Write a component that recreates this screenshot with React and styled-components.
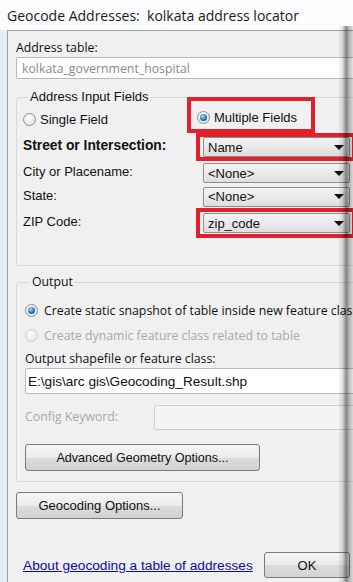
import React from 'react';
import styled, { createGlobalStyle, css } from 'styled-components';

const Global = createGlobalStyle`
  html, body { margin: 0; padding: 0; }
  body {
    width: 353px;
    height: 582px;
    overflow: hidden;
    background: #e3eef9;
    font-family: "Open Sans", "Liberation Sans", sans-serif;
    color: #111;
  }
`;

const Window = styled.div`
  position: relative;
  width: 353px;
  height: 582px;
  overflow: hidden;
`;

const Title = styled.div`
  height: 30px;
  padding-left: 7px;
  display: flex;
  align-items: center;
  background: #fbfcfd;
  font-size: 14px;
  color: #1a1a1a;
`;

const Panel = styled.div`
  margin-left: 7px;
  width: 370px;
  height: 560px;
  box-sizing: border-box;
  border: 1px solid #a0a0a0;
  background: #f0f0f0;
  padding: 8px 0 0 8px;
`;

const Label = styled.div`
  font-size: 12.3px;
  line-height: 18px;
  width: ${p => (p.w ? `${p.w}px` : 'auto')};
  flex: none;
  color: ${p => (p.disabled ? '#a8a8a8' : '#111')};
`;

const TextBox = styled.div`
  box-sizing: border-box;
  height: ${p => p.h || 21}px;
  width: ${p => p.w}px;
  border: 1px solid ${p => (p.disabled ? '#cfcfcf' : '#b9b9b9')};
  border-radius: 2px;
  background: ${p => (p.disabled ? '#f4f4f4' : '#fff')};
  padding: 0 ${p => p.px ?? 5}px;
  display: flex;
  align-items: center;
  font-size: ${p => p.fs || 12.3}px;
  color: ${p => (p.grey ? '#8a8a8a' : '#111')};
  font-family: ${p => (p.arial ? '"Liberation Sans", sans-serif' : 'inherit')};
`;

const Group = styled.fieldset`
  margin: ${p => p.mt || 0}px 0 0 0;
  padding: ${p => p.pad || '0'};
  border: 1px solid #d4d9dd;
  border-radius: 3px;
  height: ${p => p.h}px;
  box-sizing: border-box;
  min-width: 0;
`;

const Legend = styled.legend`
  padding: 0 2px;
  margin-left: 5px;
  font-size: ${p => (p.tahoma ? '13px' : '12.3px')};
  line-height: 16px;
  font-family: ${p => (p.tahoma ? '"Liberation Sans", sans-serif' : 'inherit')};
`;

const RadioRow = styled.div`
  display: flex;
  align-items: center;
  gap: ${p => (p.tahoma ? 4 : 6)}px;
  height: ${p => p.h || 22}px;
  margin-top: ${p => p.mt || 0}px;
  font-size: ${p => (p.tahoma ? '13px' : '12.3px')};
  font-family: ${p => (p.tahoma ? '"Liberation Sans", sans-serif' : 'inherit')};
  color: ${p => (p.disabled ? '#a8a8a8' : '#111')};
  white-space: nowrap;
`;

const RadioDot = styled.span`
  width: 13px;
  height: 13px;
  box-sizing: border-box;
  border-radius: 50%;
  border: 1px solid ${p => (p.disabled ? '#d0d0d0' : '#8c8c8c')};
  background: radial-gradient(circle at 40% 35%, #fff, #dcdcdc);
  display: inline-flex;
  align-items: center;
  justify-content: center;
  flex: none;
  ${p => p.checked && css`
    &::after {
      content: '';
      width: 7px;
      height: 7px;
      border-radius: 50%;
      background: radial-gradient(circle at 40% 35%, #9fdcff, #1b6fb5 60%, #0b3e70);
    }
  `}
`;

const Row = styled.div`
  display: flex;
  align-items: center;
  height: ${p => p.h || 26}px;
  margin-top: ${p => p.mt || 0}px;
`;

const TopRadios = styled.div`
  display: flex;
  align-items: flex-start;
  height: 36px;
  margin-top: -8px;
`;

const Highlight = styled.div`
  border: 4px solid #e2202b;
  box-sizing: border-box;
  display: flex;
  align-items: ${p => p.align || 'center'};
  margin-left: ${p => p.ml || 0}px;
  padding: ${p => p.pad || '0'};
  height: ${p => p.h}px;
  width: ${p => p.w}px;
  flex: none;
`;

const FieldLabel = styled.div`
  width: 180px;
  flex: none;
  font-size: ${p => (p.bold ? '13.8px' : '13px')};
  font-family: "Liberation Sans", sans-serif;
  font-weight: ${p => (p.bold ? 700 : 400)};
  color: #111;
  margin-top: -3px;
`;

const Combo = styled.div`
  box-sizing: border-box;
  width: 147px;
  height: 20px;
  border: 1px solid #8e8e8e;
  border-radius: 2px;
  background: linear-gradient(#f4f4f4, #dedede);
  display: flex;
  align-items: center;
  justify-content: space-between;
  padding: 0 5px 0 4px;
  font-size: 13px;
  font-family: "Liberation Sans", sans-serif;
  color: #111;
  flex: none;
  &::after {
    content: '';
    border-left: 5px solid transparent;
    border-right: 5px solid transparent;
    border-top: 5px solid #111;
  }
`;

const Button = styled.div`
  box-sizing: border-box;
  width: ${p => p.w}px;
  height: ${p => p.h || 27}px;
  margin: ${p => p.m || 0};
  border: 1px solid #7a7a7a;
  border-radius: 3px;
  background: linear-gradient(#f5f5f5 0%, #ebebeb 50%, #dcdcdc 51%, #d2d2d2 100%);
  display: flex;
  align-items: center;
  justify-content: center;
  font-size: ${p => p.fs || 13}px;
  font-family: "Liberation Sans", sans-serif;
  color: #111;
`;

const Footer = styled.div`
  display: flex;
  align-items: center;
  justify-content: space-between;
  margin-top: 33px;
  width: 334px;
  padding-left: 7px;
  box-sizing: border-box;
`;

const Link = styled.a`
  font-size: 13.7px;
  font-family: "Liberation Sans", sans-serif;
  color: #0a0aa8;
  text-decoration: underline;
`;

const EdgeShade = styled.div`
  position: absolute;
  top: 26px;
  right: 0;
  width: 15px;
  bottom: 0;
  pointer-events: none;
  background: linear-gradient(to right, rgba(0,0,0,0) 0%, rgba(0,0,0,0.12) 30%, rgba(0,0,0,0.45) 55%, rgba(0,0,0,0.25) 75%, rgba(0,0,0,0.1) 100%);
`;

const fields = [
  { label: 'Street or Intersection:', value: 'Name', bold: true, mark: true, h: 28 },
  { label: 'City or Placename:', value: '<None>', h: 24 },
  { label: 'State:', value: '<None>', h: 23 },
  { label: 'ZIP Code:', value: 'zip_code', mark: true, h: 30 },
];

function FieldRow({ f }) {
  const combo = <Combo>{f.value}</Combo>;
  return (
    <Row h={f.h}>
      <FieldLabel bold={f.bold}>{f.label}</FieldLabel>
      {f.mark ? (
        <Highlight ml={-7} pad="0 0 0 3px" h={f.h} w={160}>{combo}</Highlight>
      ) : combo}
    </Row>
  );
}

export default function App() {
  return (
    <Window>
      <Global />
      <Title>Geocode Addresses:&nbsp; kolkata address locator</Title>
      <Panel>
        <Label>Address table:</Label>
        <TextBox w={350} grey h={22}>kolkata_government_hospital</TextBox>

        <Group mt={10} h={177} pad="0 0 0 6px">
          <Legend tahoma>Address Input Fields</Legend>
          <TopRadios>
            <RadioRow tahoma mt={12} h={20}>
              <RadioDot /> Single Field
            </RadioRow>
            <Highlight ml={79} pad="6px 0 0 6px" align="flex-start" h={36} w={128}>
              <RadioRow tahoma h={20}>
                <RadioDot checked /> Multiple Fields
              </RadioRow>
            </Highlight>
          </TopRadios>
          {fields.map(f => <FieldRow key={f.label} f={f} />)}
        </Group>

        <Group mt={8} h={208} pad="8px 0 0 8px">
          <Legend>Output</Legend>
          <RadioRow h={25}>
            <RadioDot checked /> Create static snapshot of table inside new feature class
          </RadioRow>
          <RadioRow h={25} disabled>
            <RadioDot disabled /> Create dynamic feature class related to table
          </RadioRow>
          <Label style={{ marginTop: 2 }}>Output shapefile or feature class:</Label>
          <TextBox w={340} h={26} fs={13.6} px={2} arial>E:\gis\arc gis\Geocoding_Result.shp</TextBox>
          <Row h={36} mt={5}>
            <Label disabled w={129}>Config Keyword:</Label>
            <TextBox disabled w={220} h={25} />
          </Row>
          <Button w={235} fs={12.6} m="9px 0 0 0">Advanced Geometry Options...</Button>
        </Group>

        <Button w={167} m="10px 0 0 0">Geocoding Options...</Button>

        <Footer>
          <Link>About geocoding a table of addresses</Link>
          <Button w={86} h={26}>OK</Button>
        </Footer>
      </Panel>
      <EdgeShade />
    </Window>
  );
}
